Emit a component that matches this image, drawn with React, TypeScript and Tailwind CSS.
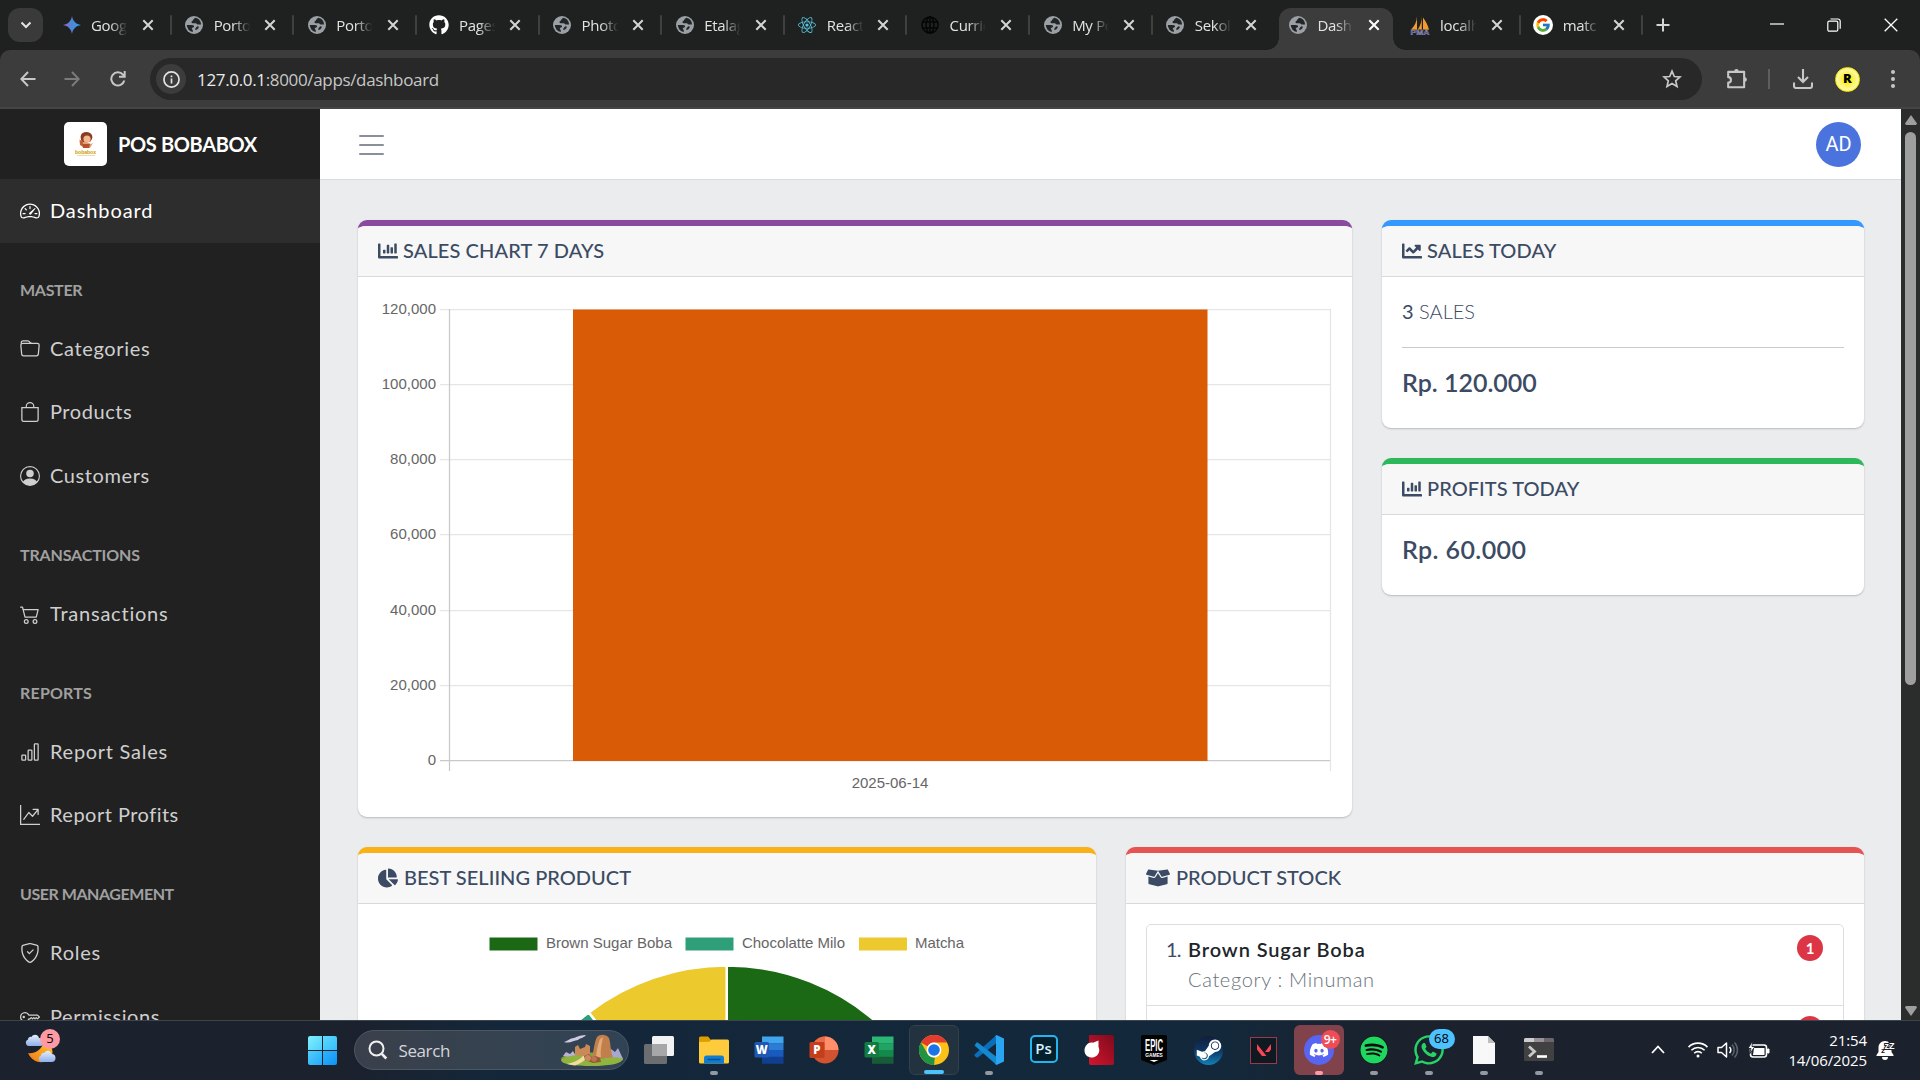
import type { ReactNode } from 'react';
import {
  BsSpeedometer2, BsFolder, BsBag, BsPersonCircle, BsCart2, BsBarChart,
  BsGraphUpArrow, BsShieldCheck, BsKey,
} from 'react-icons/bs';
import {
  FaChartBar, FaChartLine, FaChartPie, FaBoxOpen, FaGithub, FaReact,
  FaDiscord, FaSteamSymbol, FaSpotify, FaWhatsapp,
} from 'react-icons/fa';
import { FcGoogle } from 'react-icons/fc';

/* ---------- Browser chrome ---------- */

const GlobeFavicon = () => (
  <svg viewBox="0 0 18 18" className="size-[18px]">
    <circle cx="9" cy="9" r="9" fill="#9aa0a6" />
    <path d="M10.2 1.8c-.6 1-1.8 1-2 2.100-.2 1.100-1.600.8-1.700 2-.1 1 .9 1.300 1.900 1.300h2.300c.9 0 1.100 1.100 1.900 1.300.9.200 1.900-.3 3.500 0a7.200 7.200 0 0 0-5.900-6.700zM1.800 9.100a7.200 7.200 0 0 0 6 7v-1.600c0-.9-1-1-1-2 0-.8 1.200-.9 1.900-1.300.7-.4.3-1.700-.6-1.900C6.300 9 3.800 9.100 1.800 9.100z" fill="#242626" />
    <path d="M12.800 10.300c-1.200 0-1.300 1.200-2.200 1.900-.7.500-.6 1.500.1 1.600 1.200.1 2-.9 2.800-1.900.5-.8.300-1.600-.7-1.600z" fill="#242626" />
  </svg>
);

const GeminiFavicon = () => (
  <svg viewBox="0 0 18 18" className="size-[18px]">
    <defs>
      <linearGradient id="gem" x1="0" y1="0" x2="1" y2="0">
        <stop offset="0" stopColor="#8f6bc0" />
        <stop offset=".5" stopColor="#4f86d9" />
        <stop offset="1" stopColor="#2aa3e8" />
      </linearGradient>
    </defs>
    <path d="M9 0c.7 5 4 8.300 9 9-5 .7-8.300 4-9 9-.7-5-4-8.300-9-9 5-.7 8.300-4 9-9z" fill="url(#gem)" />
  </svg>
);

const WireGlobe = () => (
  <svg viewBox="0 0 18 18" className="size-[18px]" fill="none" stroke="#050505" strokeWidth="1.5">
    <circle cx="9" cy="9" r="8" />
    <ellipse cx="9" cy="9" rx="4" ry="8" />
    <path d="M1.500 6h15M1.500 12h15M9 1v16" />
  </svg>
);

const PmaFavicon = () => (
  <svg viewBox="0 0 20 20" className="-ml-px size-5">
    <path d="M7 1.500C6.800 7 4.500 11 1 14.500l6 .3zM11.800 0c.2 6-1.300 10.500-4 14.500h4zM13 2.500c3.300 4.500 5 8 6 12.200l-6-.2z" fill="#f29b2e" />
    <text x="10" y="19.800" textAnchor="middle" textLength="19" lengthAdjust="spacingAndGlyphs" fontFamily="Liberation Sans" fontWeight="700" fontSize="8" fill="#3c3f73" stroke="#a9abcf" strokeWidth=".4">PMA</text>
  </svg>
);

const GoogleFavicon = () => (
  <span className="flex size-5 items-center justify-center rounded-full bg-white">
    <FcGoogle className="size-4" />
  </span>
);

type TabInfo = { title: string; icon: ReactNode; active?: boolean; sep?: boolean };

const tabs: TabInfo[] = [
  { title: 'Goog', icon: <GeminiFavicon />, sep: true },
  { title: 'Porto', icon: <GlobeFavicon />, sep: true },
  { title: 'Porto', icon: <GlobeFavicon />, sep: true },
  { title: 'Pages', icon: <FaGithub className="size-5 text-white" />, sep: true },
  { title: 'Photo', icon: <GlobeFavicon />, sep: true },
  { title: 'Etalag', icon: <GlobeFavicon />, sep: true },
  { title: 'React', icon: <FaReact className="size-[18px] text-[#58c4dc]" />, sep: true },
  { title: 'Curric', icon: <WireGlobe />, sep: true },
  { title: 'My Po', icon: <GlobeFavicon />, sep: true },
  { title: 'Sekol', icon: <GlobeFavicon /> },
  { title: 'Dash', icon: <GlobeFavicon />, active: true },
  { title: 'localh', icon: <PmaFavicon />, sep: true },
  { title: 'matc', icon: <GoogleFavicon />, sep: true },
];

const CloseX = ({ bright }: { bright?: boolean }) => (
  <svg viewBox="0 0 12 12" className={bright ? 'size-3 text-white' : 'size-3 text-[#d4d4d4]'} stroke="currentColor" strokeWidth="2" fill="none">
    <path d="M1.300 1.300l9.400 9.400M10.700 1.300l-9.400 9.400" />
  </svg>
);

function Tab({ tab }: { tab: TabInfo }) {
  return (
    <div className="relative flex h-[50px] w-[122.65px] items-center">
      {tab.active && (
        <div className="absolute top-2 bottom-0 left-1 w-[114px] rounded-t-xl bg-[#3c3c3c]">
          <div className="absolute bottom-0 -left-3 size-3 bg-[radial-gradient(circle_at_0_0,transparent_11.500px,#3c3c3c_12px)]" />
          <div className="absolute -right-3 bottom-0 size-3 bg-[radial-gradient(circle_at_100%_0,transparent_11.500px,#3c3c3c_12px)]" />
        </div>
      )}
      <div className="relative flex w-full items-center pl-[12.500px]">
        <div className="flex w-5 justify-center">{tab.icon}</div>
        <div className="ml-[9.500px] w-[38px] overflow-hidden text-[15px] leading-5 tracking-[-0.3px] whitespace-nowrap text-[#e3e3e3] [mask-image:linear-gradient(to_right,#000_50%,transparent_96%)]">
          {tab.title}
        </div>
        <div className="ml-[12.500px]"><CloseX bright={tab.active} /></div>
      </div>
      {tab.sep && <div className="h-5 w-0.5 shrink-0 rounded bg-[#3f4040]" />}
    </div>
  );
}

function TabStrip() {
  return (
    <div className="flex h-[50px] items-center bg-[#1f2121] pl-2">
      <button className="flex h-[34px] w-[35px] items-center justify-center rounded-xl bg-[#3a3a3a]">
        <svg viewBox="0 0 12 8" className="h-2 w-3" stroke="#e3e3e3" strokeWidth="2" fill="none"><path d="M1.500 1.500L6 6l4.500-4.500" /></svg>
      </button>
      <div className="ml-[6px] flex">{tabs.map((t, i) => <Tab key={i} tab={t} />)}</div>
      <svg viewBox="0 0 14 14" className="ml-[13px] size-[14px]" stroke="#d4d4d4" strokeWidth="2"><path d="M7 .5v13M.5 7h13" /></svg>
      <div className="ml-auto flex items-center gap-[43px] pr-[22px]">
        <svg viewBox="0 0 14 14" className="size-[14px]" stroke="#fff" strokeWidth="1.200"><path d="M0 6h14" /></svg>
        <svg viewBox="0 0 14 14" className="size-[14px]" stroke="#fff" strokeWidth="1.200" fill="none">
          <rect x=".8" y="3.200" width="10" height="10" rx="1.500" /><path d="M3.500 1h7.500a2.200 2.200 0 0 1 2.200 2.200v7.500" />
        </svg>
        <svg viewBox="0 0 14 14" className="size-[14px]" stroke="#fff" strokeWidth="1.300"><path d="M.7.7l12.600 12.600M13.300.7L.7 13.300" /></svg>
      </div>
    </div>
  );
}

function Toolbar() {
  return (
    <div className="h-[59px] bg-[#1f2121]">
      <div className="flex h-[59px] items-center rounded-t-[10px] border-b-2 border-[#454545] bg-[#3c3c3c] pt-px pl-5">
        <svg viewBox="0 0 16 16" className="size-4" stroke="#c7c7c7" strokeWidth="2" fill="none"><path d="M15.500 8H1.500M8 1L1.300 8 8 15" /></svg>
        <svg viewBox="0 0 16 16" className="ml-7 size-4" stroke="#7b7b7b" strokeWidth="2" fill="none"><path d="M.5 8h14M8 1l6.700 7L8 15" /></svg>
        <svg viewBox="0 0 16 16" className="ml-[29.500px] size-4" stroke="#c7c7c7" strokeWidth="2" fill="none"><path d="M14.300 9.500A6.600 6.600 0 1 1 13 3.700l1.300 1.500M14.700 0v5.800H9" /></svg>
        <div className="ml-[24.500px] flex h-[42px] w-[1552px] items-center rounded-full bg-[#282828] pl-[6px]">
          <div className="flex size-[30px] items-center justify-center rounded-full bg-[#3c3c3c]">
            <svg viewBox="0 0 18 18" className="size-[17px]" stroke="#e3e3e3" strokeWidth="1.800" fill="none"><circle cx="9" cy="9" r="8" /><path d="M9 8v5.300M9 4.700v2" /></svg>
          </div>
          <div className="mt-px ml-[11px] text-[17px] tracking-[-0.34px] text-[#c7c7c7]"><span className="text-[#eaeaea]">127.0.0.1</span>:8000/apps/dashboard</div>
          <svg viewBox="0 0 20 20" className="mr-5 ml-auto size-5" stroke="#c7c7c7" strokeWidth="1.700" fill="none"><path d="M10 2.200l2.300 5.300 5.700.5-4.300 3.800 1.300 5.600-5-3-5 3 1.300-5.600L2 8l5.700-.5z" /></svg>
        </div>
        <svg viewBox="0 0 20 20" className="ml-6 size-[22px]" stroke="#c7c7c7" strokeWidth="1.900" fill="none">
          <path d="M2 3.500h14.500v14H2v-4.200a2.500 2.500 0 0 0 0-5z" strokeLinejoin="round" />
          <path d="M7.500 3a2 2 0 0 1 4 0zM17 8.500a2 2 0 0 1 0 4z" fill="#c7c7c7" stroke="none" />
        </svg>
        <div className="ml-5 h-5 w-0.5 bg-[#5e5e5e]" />
        <svg viewBox="0 0 20 20" className="ml-[23px] size-5" stroke="#c7c7c7" strokeWidth="2.100" fill="none"><path d="M10 0v12.500M5 8l5 5 5-5M1 13.500V17a2 2 0 0 0 2 2h14a2 2 0 0 0 2-2v-3.500" /></svg>
        <div className="ml-[22px] flex size-[25px] items-center justify-center rounded-full border-[1.500px] border-[#f5e800] bg-[radial-gradient(circle,#fdf000_15%,#fdf6a0_60%,#fdf25a)] text-[13px] font-extrabold text-black">R</div>
        <div className="ml-[30.500px] flex flex-col gap-[3px]">
          <i className="size-1 rounded-full bg-[#c7c7c7]" /><i className="size-1 rounded-full bg-[#c7c7c7]" /><i className="size-1 rounded-full bg-[#c7c7c7]" />
        </div>
      </div>
    </div>
  );
}

/* ---------- Sidebar ---------- */

function NavItem({ icon, active, children }: { icon: ReactNode; active?: boolean; children: ReactNode }) {
  return (
    <a className={active
      ? 'flex h-[63.500px] shrink-0 items-center bg-[#2d2d2d] pl-5 text-xl text-white'
      : 'flex h-[63.500px] shrink-0 items-center pl-5 text-xl text-[#cfcfcf]'}>
      <span className="mr-[10px] text-[20px]">{icon}</span>
      <span className="pb-[2px]">{children}</span>
    </a>
  );
}

const NavHeading = ({ children }: { children: ReactNode }) => (
  <div className="flex h-[74.500px] shrink-0 items-end pb-[15.500px] pl-5 text-base font-bold text-[#a0a0a0]">{children}</div>
);

function BobaLogo() {
  return (
    <div className="flex h-11 w-[43px] items-center justify-center rounded-[5px] bg-white">
      <svg viewBox="0 0 33 34" className="h-[34px] w-[33px]">
        <path d="M12 8c1-3 6-4 9-2 2 1 3 4 2 6l-2 3h-8c-1-2-2-5-1-7z" fill="#8a3b20" />
        <circle cx="18" cy="12" r="3.600" fill="#f2b890" />
        <path d="M12 15l-2-3 1 6 4 3h6l3-5-2 1-4-2z" fill="#e2a07a" />
        <path d="M11 13l3 1v5l-3-1z" fill="#c2603a" />
        <path d="M13 17h8l-1 4h-6z" fill="#b5522c" />
        <text x="16.500" y="26.500" textAnchor="middle" textLength="21" lengthAdjust="spacingAndGlyphs" fontFamily="Liberation Sans" fontWeight="700" fontSize="5.500" fill="#cf9800">bobabox</text>
        <path d="M8 28.500h18" stroke="#ecd9a0" strokeWidth=".9" />
      </svg>
    </div>
  );
}

function Sidebar() {
  return (
    <aside className="flex w-[320px] shrink-0 flex-col overflow-hidden bg-[#212121] font-['Lato',sans-serif]">
      <div className="flex h-[70px] shrink-0 items-center pl-16">
        <BobaLogo />
        <span className="ml-[11px] pb-px text-xl font-bold tracking-[-0.35px] text-white">POS BOBABOX</span>
      </div>
      <NavItem active icon={<BsSpeedometer2 />}><span className="tracking-[0.9px]">Dashboard</span></NavItem>
      <NavHeading><span className="tracking-[-0.3px]">MASTER</span></NavHeading>
      <NavItem icon={<BsFolder />}><span className="tracking-[0.65px]">Categories</span></NavItem>
      <NavItem icon={<BsBag />}><span className="tracking-[0.55px]">Products</span></NavItem>
      <NavItem icon={<BsPersonCircle />}><span className="tracking-[0.6px]">Customers</span></NavItem>
      <NavHeading><span className="tracking-[-0.15px]">TRANSACTIONS</span></NavHeading>
      <NavItem icon={<BsCart2 />}><span className="tracking-[0.78px] [font-variant-ligatures:none]">Transactions</span></NavItem>
      <NavHeading><span className="tracking-[0.2px]">REPORTS</span></NavHeading>
      <NavItem icon={<BsBarChart />}><span className="tracking-[0.72px]">Report Sales</span></NavItem>
      <NavItem icon={<BsGraphUpArrow />}><span className="tracking-[0.48px]">Report Profits</span></NavItem>
      <NavHeading><span className="tracking-[-0.45px]">USER MANAGEMENT</span></NavHeading>
      <NavItem icon={<BsShieldCheck />}><span className="tracking-[0.75px]">Roles</span></NavItem>
      <NavItem icon={<BsKey />}><span className="tracking-[0.55px]">Permissions</span></NavItem>
    </aside>
  );
}

/* ---------- Dashboard cards ---------- */

function Card({ frame, icon, title, children }: { frame: string; icon: ReactNode; title: ReactNode; children?: ReactNode }) {
  return (
    <section className={`overflow-hidden rounded-[9px] border-t-[6px] bg-white shadow-[0_1px_2px_rgba(0,0,0,0.22)] ${frame}`}>
      <header className="flex h-[51px] items-center border-b border-[#d8d9da] bg-[#f7f7f7] pb-px pl-[19.500px] text-xl font-medium text-[#3c4b64]">
        <span className="mr-[5.500px]">{icon}</span>
        <span className="pb-px">{title}</span>
      </header>
      {children}
    </section>
  );
}

const salesTicks = ['120,000', '100,000', '80,000', '60,000', '40,000', '20,000', '0'];

function SalesChart() {
  const top = 32;
  const step = 75.33;
  return (
    <svg viewBox="0 0 994 540" className="block h-[540px] w-[994px]" fontFamily="Liberation Sans" fontSize="15" fill="#666">
      {salesTicks.map((t, i) => {
        const y = Math.floor(top + i * step) + 0.5;
        return (
          <g key={t}>
            <path d={`M82 ${y}H972`} stroke={t === '0' ? '#c9c9c9' : '#e5e5e5'} strokeWidth="1.250" />
            <text x="78" y={y + 4} textAnchor="end">{t}</text>
          </g>
        );
      })}
      <path d="M91.500 32v462" stroke="#c9c9c9" strokeWidth="1.250" />
      <path d="M972.500 32v462" stroke="#e5e5e5" strokeWidth="1.250" />
      <rect x="215" y="32.500" width="634.500" height="451.500" fill="#d95b06" />
      <text x="532" y="511" textAnchor="middle">2025-06-14</text>
    </svg>
  );
}

function BestSellingChart() {
  return (
    <svg viewBox="0 0 738 116" className="block h-[116px] w-[738px]" fontFamily="Liberation Sans" fontSize="15" fill="#666">
      <rect x="131.500" y="33.500" width="48" height="13" fill="#1b6914" />
      <text x="188" y="44" textLength="126">Brown Sugar Boba</text>
      <rect x="327.500" y="33.500" width="48" height="13" fill="#2e9f78" />
      <text x="384" y="44" textLength="103">Chocolatte Milo</text>
      <rect x="501" y="33.500" width="48" height="13" fill="#ecc92c" />
      <text x="557" y="44" textLength="49">Matcha</text>
      <g stroke="#fff" strokeWidth="2.500">
        <path d="M368.700 288V61.500A226.500 226.500 0 0 1 368.700 514.500z" fill="#1b6914" />
        <path d="M368.700 288L230.700 108.400A226.500 226.500 0 0 1 368.700 61.500z" fill="#ecc92c" />
        <path d="M368.700 288V514.500A226.500 226.500 0 0 1 230.700 108.400z" fill="#2e9f78" />
      </g>
    </svg>
  );
}

const CountBadge = ({ children }: { children: ReactNode }) => (
  <span className="ml-auto flex size-[26px] items-center justify-center rounded-full bg-[#dc3545] text-[15px] font-bold text-white">{children}</span>
);

function Dashboard() {
  return (
    <main className="flex grow flex-col overflow-hidden bg-[#ebecee] font-['Lato',sans-serif]">
      <div className="flex h-[71px] shrink-0 items-center justify-between border-b border-[#d8dbe0] bg-white pr-10 pl-[39px]">
        <div className="flex w-[25px] flex-col gap-[7px] pt-px">
          <i className="h-0.5 rounded bg-[#8a8f9b]" /><i className="h-0.5 rounded bg-[#8a8f9b]" /><i className="h-0.5 rounded bg-[#8a8f9b]" />
        </div>
        <div className="flex size-[45px] items-center justify-center rounded-full bg-[#4b73de] font-['Roboto',sans-serif] text-xl text-white">AD</div>
      </div>
      <div className="flex flex-col gap-[30px] pt-10 pr-[37px] pl-[38px]">
        <div className="flex items-start gap-[30px]">
          <Card frame="w-[994px] h-[597px] border-[#8a4a9e]" icon={<FaChartBar />} title={<span className="tracking-[0.1px]">SALES CHART 7 DAYS</span>}>
            <SalesChart />
          </Card>
          <div className="flex w-[482px] flex-col gap-[30px]">
            <Card frame="h-[208px] border-[#3399ff]" icon={<FaChartLine />} title={<span className="tracking-[0.1px]">SALES TODAY</span>}>
              <div className="px-5 pt-[19px] text-[#3c4b64]">
                <div className="text-xl leading-[30px] font-light"><b>3</b> SALES</div>
                <hr className="mt-[21px] mb-[19px] border-[#c9cacc]" />
                <div className="text-[25px] leading-[30px] font-semibold">Rp. 120.000</div>
              </div>
            </Card>
            <Card frame="h-[137px] border-[#2eb85c]" icon={<FaChartBar />} title={<span className="tracking-[0.05px]">PROFITS TODAY</span>}>
              <div className="px-5 pt-[19px] text-[25px] leading-[30px] font-semibold tracking-[0.4px] text-[#3c4b64]">Rp. 60.000</div>
            </Card>
          </div>
        </div>
        <div className="flex gap-[30px]">
          <Card frame="w-[738px] h-[300px] border-[#f9b115]" icon={<FaChartPie className="mr-px" />} title={<span className="tracking-[0.03px]">BEST SELIING PRODUCT</span>}>
            <BestSellingChart />
          </Card>
          <Card frame="w-[738px] h-[300px] border-[#e55353]" icon={<FaBoxOpen className="mr-px w-6" />} title="PRODUCT STOCK">
            <div className="mx-5 mt-5 rounded-[5px] border border-[#dcdddf] text-xl leading-[30px]">
              <div className="flex h-[81px] items-start border-b border-[#dcdddf] px-5 pt-[10px]">
                <span className="-mt-px -ml-px w-[22px] tracking-[-0.8px] text-[#3c4b64]">1.</span>
                <div className="-mt-px">
                  <div className="font-semibold tracking-[0.9px] text-[#212529]">Brown Sugar Boba</div>
                  <div className="font-light tracking-[0.65px] text-[#69727a]">Category : Minuman</div>
                </div>
                <CountBadge>1</CountBadge>
              </div>
              <div className="flex h-[81px] items-start px-5 pt-[10px]"><CountBadge>{null}</CountBadge></div>
            </div>
          </Card>
        </div>
      </div>
    </main>
  );
}

const PageScrollbar = () => (
  <div className="flex w-[19px] shrink-0 flex-col items-center bg-[#2b2c2c] pt-[6px]">
    <svg viewBox="0 0 12 10" className="h-[10px] w-3" fill="#9f9f9f"><path d="M6 0l6 8.500-1 1.500H1L0 8.500z" /></svg>
    <div className="mt-[7px] h-[553px] w-[11px] rounded-full bg-[#9f9f9f]" />
    <svg viewBox="0 0 12 10" className="mt-auto mb-1 h-[10px] w-3" fill="#9f9f9f"><path d="M6 10L0 1.500 1 0h10l1 1.500z" /></svg>
  </div>
);

/* ---------- Taskbar ---------- */

type SlotProps = { dot?: string; tile?: string; children: ReactNode };

const Slot = ({ dot, tile, children }: SlotProps) => (
  <div className={`relative mx-[2.500px] flex h-[50px] w-[50px] shrink-0 items-center justify-center rounded-md ${tile ?? ''}`}>
    {children}
    {dot && <span className={`absolute bottom-0 left-1/2 h-1 -translate-x-1/2 rounded-full ${dot}`} />}
  </div>
);

const running = 'w-2 bg-[#9299a1]';

const WeatherIcon = () => (
  <svg viewBox="0 0 36 36" className="size-9">
    <defs>
      <linearGradient id="moon" x1="0" y1="1" x2="1" y2="0"><stop offset="0" stopColor="#f0761a" /><stop offset="1" stopColor="#ffc928" /></linearGradient>
      <linearGradient id="cloud" x1="0" y1="0" x2="0" y2="1"><stop offset="0" stopColor="#e4edfb" /><stop offset="1" stopColor="#8fb0ea" /></linearGradient>
    </defs>
    <path d="M4 24c6 1 13-2 16-11 6 2 10 7 8 13-3 9-18 11-24-2z" fill="url(#moon)" />
    <path d="M4 17a3.500 3.500 0 0 1 0-6.500c0-2 2-3 3.500-2.500C9 5 14 5 15 9c3 0 5 2 5 4s-1 4-4 4z" fill="url(#cloud)" />
    <path d="M17 33a3.500 3.500 0 0 1 0-6.500c0-2 2-3 3.500-2.500 1.500-3 6-3 7 1 3 0 4 2 4 4s-1 4-4 4z" fill="url(#cloud)" />
  </svg>
);

const SearchArt = () => (
  <svg viewBox="0 0 62 32" className="h-8 w-[62px]">
    <ellipse cx="31" cy="25" rx="31" ry="6.500" fill="#7fa63a" />
    <path d="M44 25l6-10 4 3 3-4 5 11z" fill="#a9a6cf" />
    <path d="M2 22l3-4 4 2 3-3 4 7z" fill="#b9b3d6" />
    <path d="M14 24V13l3-2 2 4 5-2 1-3 4 2v12z" fill="#c98a58" />
    <path d="M31 24c2-8 2-15 5-21 3-3 9-3 12 1 2 6 1 11 4 20z" fill="#c17f4c" />
    <path d="M35 23c1-8 2-13 4-18l3-2c-1 7-3 13-2 20z" fill="#e2aa76" />
    <path d="M0 26c8-6 20-6 31-2s20-4 31 1c-2 5-15 7-31 7S1 31 0 26z" fill="#8fb53f" />
    <path d="M6 30c8-2 12-4 16-8l5 1c-4 4-8 7-13 8.500z" fill="#f3dca0" />
    <path d="M23 22l5-2 3 3 4-1 4 2 1 4-8 1-8-3z" fill="#9a5636" />
    <circle cx="27" cy="24" r="3" fill="#c98a62" /><circle cx="33" cy="25" r="2.800" fill="#b87650" />
    <path d="M3 8c4-1 6-4 10-4 4-2 8-3 12-3-2 3-6 3-8 5-4 0-8 4-14 2z" fill="#cfc9e4" />
  </svg>
);

const OfficeDoc = ({ letter, stripes, badge }: { letter: string; stripes: string[]; badge: string }) => (
  <svg viewBox="0 0 30 30" className="size-[30px]">
    {stripes.map((c, i) => <rect key={i} x="8" y={1.5 + i * 6.75} width="21.500" height="7" fill={c} />)}
    <rect x=".5" y="7" width="14.500" height="15.500" rx="1.500" fill={badge} />
    <text x="7.700" y="19" textAnchor="middle" fontFamily="Open Sans" fontWeight="800" fontSize="11.500" fill="#fff">{letter}</text>
  </svg>
);

const PowerPoint = () => (
  <svg viewBox="0 0 30 30" className="size-[30px]">
    <circle cx="16" cy="15" r="13.500" fill="#d35230" />
    <path d="M16 1.500A13.500 13.500 0 0 0 2.500 15H16z" fill="#ed6c47" />
    <path d="M16 1.500A13.500 13.500 0 0 1 29.500 15H16z" fill="#ff8f6b" />
    <rect x=".5" y="7" width="15" height="16" rx="1.500" fill="#c43e1c" />
    <text x="8" y="19" textAnchor="middle" fontFamily="Open Sans" fontWeight="800" fontSize="11.500" fill="#fff">P</text>
  </svg>
);

const ChromeLogo = () => (
  <svg viewBox="0 0 30 30" className="size-[30px]">
    <circle cx="15" cy="15" r="15" fill="#fbc116" />
    <path d="M2 7.500A15 15 0 0 1 28 7.500H15A7.500 7.500 0 0 0 8.500 11.300z" fill="#e33b2e" />
    <path d="M2 7.500L8.500 18.750A7.500 7.500 0 0 0 15 22.500l3.500-.9L15 30A15 15 0 0 1 2 7.500z" fill="#229342" />
    <path d="M15 30L21.500 18.750 16 21z" fill="#fbc116" />
    <circle cx="15" cy="15" r="7.400" fill="#fff" />
    <circle cx="15" cy="15" r="5.800" fill="#1a73e8" />
  </svg>
);

const VsCodeLogo = () => (
  <svg viewBox="0 0 30 30" className="size-[30px]">
    <path d="M.5 19.500L22 .5v8L3.800 22.500 2.500 22.500.5 20.700z" fill="#0a6fb8" />
    <path d="M.5 10.500L2.500 7.500h1.300L22 21.500v8L.5 10.500z" fill="#1488d1" />
    <path d="M22.500 0L30 3.500v23L22.500 30 21 28.800l1-.8V2l-1-.8z" fill="#2aa5f2" />
  </svg>
);

const FolderIcon = () => (
  <svg viewBox="0 0 30 28" className="h-[28px] w-[30px]">
    <path d="M0 2a1.500 1.500 0 0 1 1.500-1.500H9L12 4v3H0z" fill="#dd9e00" />
    <path d="M0 6l10.500-.2L12.500 3.500H28.500A1.500 1.500 0 0 1 30 5v21a1.500 1.500 0 0 1-1.500 1.500h-27A1.500 1.500 0 0 1 0 26z" fill="#fdcb3c" />
    <path d="M5 27.500V22a2.500 2.500 0 0 1 2.500-2.500h15A2.500 2.500 0 0 1 25 22v5.500z" fill="#0f7ed2" />
    <path d="M8.500 23.500h13" stroke="#0a4f94" strokeWidth="1.500" />
  </svg>
);

function Taskbar() {
  return (
    <footer className="flex h-[60px] shrink-0 items-stretch border-t border-[#3d444e] bg-[linear-gradient(90deg,#1b222d_0%,#1b212d_18%,#14273a_26%,#13283a_64%,#1b212d_72%,#1b222e_100%)] text-white">
      <div className="relative w-[295px] shrink-0 pt-2 pl-6">
        <WeatherIcon />
        <span className="absolute top-[8px] left-10 flex size-5 items-center justify-center rounded-full bg-[#ff99a4] text-[13px] text-black">5</span>
      </div>
      <div className="flex items-center pb-[1px]">
        <Slot>
          <div className="grid size-[29px] grid-cols-2 gap-px overflow-hidden rounded-[2px]">
            <i className="bg-linear-to-br from-[#7ff0ff] to-[#4fd0fb]" /><i className="bg-linear-to-br from-[#5cdcfd] to-[#36bcf9]" />
            <i className="bg-linear-to-br from-[#4fd0fb] to-[#25a9f8]" /><i className="bg-linear-to-br from-[#2fb4fa] to-[#0c92f8]" />
          </div>
        </Slot>
        <div className="mr-[2.500px] ml-[3.500px] flex h-10 w-[275px] items-center rounded-full border border-[#4d5762] bg-linear-to-r from-[#3a404b] to-[#304354] pr-[5px] pl-[13px]">
          <svg viewBox="0 0 20 20" className="size-[20px]" stroke="#f0f0f0" strokeWidth="2" fill="none"><circle cx="8.500" cy="8.500" r="7" /><path d="M13.800 13.800l4.500 4.700" strokeWidth="2.600" /></svg>
          <span className="mt-0.5 ml-[11px] text-[17px] tracking-[-0.4px] text-[#d3d6da]">Search</span>
          <span className="ml-auto"><SearchArt /></span>
        </div>
        <Slot>
          <svg viewBox="0 0 30 28" className="h-7 w-[30px]"><rect x="0" y="8" width="23" height="20" rx="1.500" fill="#6b6d70" /><rect x="8" y="0" width="22" height="20" rx="1.500" fill="#f2f2f2" /><path d="M8 8h15v12H8z" fill="#a6a7a9" /></svg>
        </Slot>
        <Slot dot={running}><FolderIcon /></Slot>
        <Slot><OfficeDoc letter="W" badge="#1f57b5" stripes={['#41a5ee', '#2b7cd3', '#185abd', '#103f91']} /></Slot>
        <Slot><PowerPoint /></Slot>
        <Slot><OfficeDoc letter="X" badge="#107c41" stripes={['#2bb673', '#21a366', '#138a4b', '#185c37']} /></Slot>
        <Slot tile="border border-[#31414f] bg-[#22323f]" dot="w-5 bg-[#4cc2ff]"><ChromeLogo /></Slot>
        <Slot dot={running}><VsCodeLogo /></Slot>
        <Slot>
          <span className="mb-[3px] flex h-[28px] w-[28px] items-center justify-center rounded-[5px] border-2 border-[#26b4ee] bg-[#05202d] text-[15px] font-semibold text-[#d5efff]">Ps</span>
        </Slot>
        <Slot>
          <svg viewBox="0 0 30 30" className="size-[30px]">
            <defs><linearGradient id="pkm" x1="0" y1="1" x2="1" y2="0"><stop offset="0" stopColor="#d5142f" /><stop offset="1" stopColor="#7d0b1c" /></linearGradient></defs>
            <path d="M5 0h23a2 2 0 0 1 2 2v26a2 2 0 0 1-2 2H7a2 2 0 0 1-2-2z" fill="url(#pkm)" />
            <path d="M3 9.500C4 8 7 7 9 7.800l5.500-2.300V12C17 17 13 22.500 7.500 22.500 0 22.500-1.500 14 3 9.500z" fill="#fff" />
          </svg>
        </Slot>
        <Slot>
          <svg viewBox="0 0 26 30" className="h-[30px] w-[26px]">
            <path d="M1.500 0h23A1.500 1.500 0 0 1 26 1.500V25l-13 5L0 25V1.500A1.500 1.500 0 0 1 1.500 0z" fill="#030303" />
            <text x="13" y="16" textAnchor="middle" textLength="18" lengthAdjust="spacingAndGlyphs" fontFamily="Liberation Sans" fontWeight="700" fontSize="16" fill="#fff">EPIC</text>
            <text x="13" y="22" textAnchor="middle" textLength="17.500" lengthAdjust="spacingAndGlyphs" fontFamily="Liberation Sans" fontWeight="700" fontSize="5.500" fill="#fff">GAMES</text>
            <path d="M8.500 25h9L13 27z" fill="#fff" />
          </svg>
        </Slot>
        <Slot>
          <span className="flex size-[29px] items-center justify-center overflow-hidden rounded-full bg-linear-to-b from-[#111d3c] via-[#0c3763] to-[#1282b8]"><FaSteamSymbol className="size-[28px] shrink-0" /></span>
        </Slot>
        <Slot>
          <span className="flex size-[27px] items-center justify-center border border-[#9a3a48] bg-[#0f1922]">
            <svg viewBox="0 0 16 12" className="h-3 w-4" fill="#fb4454"><path d="M1 0v5.500L6 12h4.500zM15 0v5.500L13 8H9z" /></svg>
          </span>
        </Slot>
        <Slot tile="bg-[#80434b]" dot="w-2 bg-[#ff99a4]">
          <span className="flex size-[30px] items-center justify-center rounded-full bg-[#5865f2]"><FaDiscord className="size-5" /></span>
          <span className="absolute top-[5px] right-[4px] flex size-[19px] items-center justify-center rounded-full bg-[#ee4d57] text-[12px] font-semibold tracking-tighter">9+</span>
        </Slot>
        <Slot dot={running}><FaSpotify className="size-[28px] rounded-full bg-[#0c0c0c] text-[#1ed760]" /></Slot>
        <Slot dot={running}>
          <FaWhatsapp className="size-[34px] text-[#25d366]" />
          <span className="absolute top-[4px] -right-px flex h-5 w-[26px] items-center justify-center rounded-full bg-[#4cc2ff] text-[13px] text-black">68</span>
        </Slot>
        <Slot dot={running}>
          <svg viewBox="0 0 22 28" className="h-7 w-[22px]"><path d="M0 0h15l7 7v21H0z" fill="#f8f8f8" /><path d="M15 0v7h7z" fill="#bdbdbd" /></svg>
        </Slot>
        <Slot dot={running}>
          <svg viewBox="0 0 30 24" className="h-6 w-[30px]">
            <rect width="30" height="23" rx="1.500" fill="#414141" /><path d="M1.500 0H10v4H0V1.500A1.500 1.500 0 0 1 1.500 0z" fill="#cfcccf" /><path d="M10 0h10v4H10z" fill="#989298" /><path d="M20 0h8.500A1.500 1.500 0 0 1 30 1.500V4H20z" fill="#6b666b" />
            <path d="M5 8.500l5.500 5-5.500 5" stroke="#c9c9c9" strokeWidth="2.800" fill="none" /><path d="M13 18.500h10" stroke="#fff" strokeWidth="2.600" />
          </svg>
        </Slot>
      </div>
      <div className="ml-auto flex items-center pr-[25px] pb-0.5">
        <svg viewBox="0 0 14 9" className="h-[9px] w-[14px]" stroke="#fff" strokeWidth="1.800" fill="none"><path d="M1 8l6-6.500L13 8" /></svg>
        <svg viewBox="0 0 22 18" className="ml-[22px] h-[17px] w-[22px]" stroke="#fff" strokeWidth="1.700" fill="none">
          <path d="M1 6.500a14 14 0 0 1 20 0M4 9.800a9.800 9.800 0 0 1 14 0M7 13a5.500 5.500 0 0 1 8 0" /><circle cx="11" cy="16" r="1.600" fill="#fff" stroke="none" />
        </svg>
        <svg viewBox="0 0 22 18" className="ml-[8px] h-[18px] w-[22px]" stroke="#fff" strokeWidth="1.500" fill="none">
          <path d="M1 6.500h3.500L9.500 2v14l-5-4.500H1z" strokeLinejoin="round" /><path d="M12.500 6a4.500 4.500 0 0 1 0 6" /><path d="M15 3.500a8 8 0 0 1 0 11M17.500 1.500a11 11 0 0 1 0 15" stroke="#5c626c" />
        </svg>
        <svg viewBox="0 0 22 18" className="ml-[9px] h-[18px] w-[22px]">
          <rect x="2.500" y="4" width="16" height="12" rx="2.500" stroke="#fff" strokeWidth="1.600" fill="none" /><path d="M19.500 8h1.500v4h-1.500z" fill="#fff" stroke="#fff" />
          <path d="M6 7h10.500v7H5z" fill="#fff" /><path d="M4.500 0L0 7.500h3L1.500 13 7 5.500H4z" fill="#fff" stroke="#1b212d" strokeWidth=".9" />
        </svg>
        <div className="ml-[17px] w-[80px] text-right text-[15px] leading-5 tracking-[-0.1px]"><div>21:54</div><div>14/06/2025</div></div>
        <svg viewBox="0 0 20 22" className="ml-[8px] h-[22px] w-5">
          <path d="M10 2c4 0 6.500 3 6.500 6.500V13l2 3v1h-17v-1l2-3V8.500C3.500 5 6 2 10 2zM7 18h6a3 3 0 0 1-6 0z" fill="#fff" />
          <text x="6" y="13.500" fontFamily="Liberation Sans" fontWeight="700" fontSize="8" fill="#1b212d">z</text>
          <text x="9.500" y="9.500" fontFamily="Liberation Sans" fontWeight="700" fontSize="9" fill="#fff" stroke="#1b212d" strokeWidth="2" paintOrder="stroke">zZ</text>
        </svg>
      </div>
    </footer>
  );
}

export default function App() {
  return (
    <div className="flex h-[1080px] w-[1920px] flex-col overflow-hidden font-['Open_Sans',sans-serif]">
      <TabStrip />
      <Toolbar />
      <div className="flex h-[911px] shrink-0 overflow-hidden">
        <Sidebar />
        <Dashboard />
        <PageScrollbar />
      </div>
      <Taskbar />
    </div>
  );
}
